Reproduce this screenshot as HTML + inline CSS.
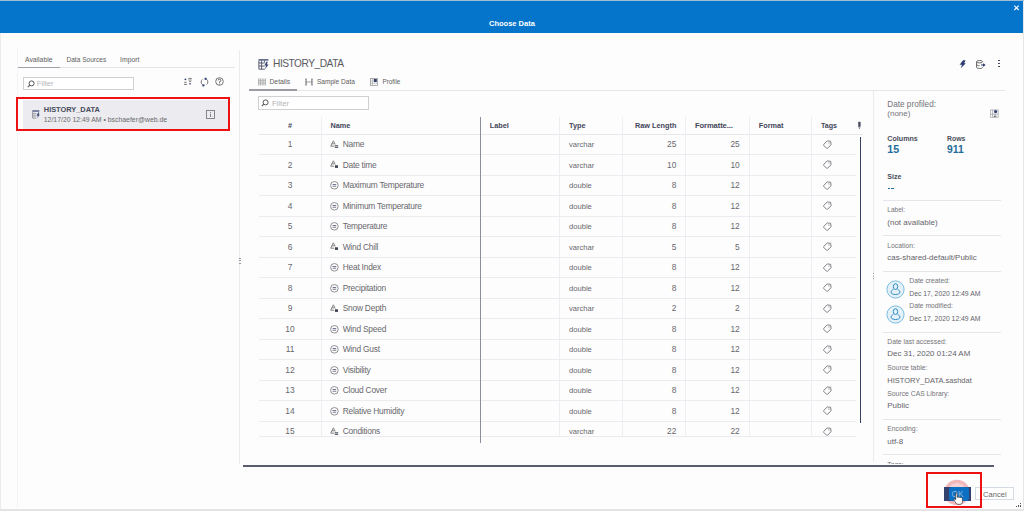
<!DOCTYPE html>
<html><head><meta charset="utf-8"><style>
html,body{margin:0;padding:0;}
body{width:1024px;height:511px;position:relative;overflow:hidden;background:#fdfdfe;font-family:"Liberation Sans",sans-serif;}
.t{position:absolute;white-space:nowrap;}
.r{position:absolute;}
</style></head><body>
<div class="r" style="left:0.00px;top:0.00px;width:1024.00px;height:1.00px;background:#9fbdd4;"></div>
<div class="r" style="left:0.00px;top:1.00px;width:1023.00px;height:31.50px;background:#0575cc;"></div>
<div class="r" style="left:1023.00px;top:1.00px;width:1.00px;height:510.00px;background:#e6e6e6;"></div>
<div class="r" style="left:0.00px;top:32.50px;width:1023.00px;height:6.50px;background:#fcfbf8;"></div>
<div class="r" style="left:0.00px;top:32.50px;width:1.00px;height:478.50px;background:#ececec;"></div>
<div class="r" style="left:0.00px;top:508.60px;width:1022.50px;height:2.40px;background:#e4e4e6;"></div>
<div class="t" style="left:489.00px;top:20.00px;font-size:7.5px;line-height:7.5px;font-weight:700;color:#ffffff;">Choose Data</div>
<svg class="r" style="left:1013.00px;top:4.00px" width="7" height="7" viewBox="0 0 7 7"><path d="M1.3 1.6 L5.7 6 M5.7 1.6 L1.3 6" stroke="#f4f8fc" stroke-width="1.2"/></svg>
<div class="r" style="left:16.80px;top:47.00px;width:1.00px;height:461.00px;background:#f3f3f5;"></div>
<div class="t" style="left:25.00px;top:57.00px;font-size:6.8px;line-height:6.8px;font-weight:400;color:#606060;">Available</div>
<div class="t" style="left:66.50px;top:57.00px;font-size:6.55px;line-height:6.55px;font-weight:400;color:#606060;">Data Sources</div>
<div class="t" style="left:120.00px;top:57.00px;font-size:6.9px;line-height:6.9px;font-weight:400;color:#606060;">Import</div>
<div class="r" style="left:18.00px;top:67.00px;width:216.50px;height:1.00px;background:#e4e4e8;"></div>
<div class="r" style="left:18.00px;top:66.80px;width:42.00px;height:1.40px;background:#a0a0a8;"></div>
<div class="r" style="left:22.70px;top:77.40px;width:111.00px;height:13.00px;background:#ffffff;border:1px solid #cfcfd4;box-sizing:border-box;"></div>
<svg class="r" style="left:26.50px;top:80.00px" width="8" height="8" viewBox="0 0 8 8"><circle cx="4.6" cy="3.4" r="2.5" fill="none" stroke="#555" stroke-width="1"/><path d="M2.8 5.2 L0.8 7.2" stroke="#555" stroke-width="1.1"/></svg>
<div class="t" style="left:36.70px;top:80.00px;font-size:7.6px;line-height:7.6px;font-weight:400;color:#b4b4b8;">Filter</div>
<svg class="r" style="left:183.00px;top:77.00px" width="10" height="9" viewBox="0 0 10 9"><circle cx="2.4" cy="2.3" r="0.9" fill="#2e3d6e"/><path d="M1.2 5.3h2.4M1 7.4h3" stroke="#666" stroke-width="0.9"/><path d="M5.2 1.4h3.6M5.4 3h3.2M6 4.6h2.2" stroke="#666" stroke-width="0.8"/><path d="M5.9 6.3h2.3L7 7.9z" fill="#2e3d6e"/></svg>
<svg class="r" style="left:199.50px;top:77.00px" width="9" height="10" viewBox="0 0 9 10"><path d="M6.4 2.2A3.4 3.4 0 0 1 6.6 7.6M2.6 7.8A3.4 3.4 0 0 1 2.4 2.4" stroke="#666" stroke-width="0.9" fill="none"/><path d="M4.6 0.8h2v2h-2z" fill="#2e3d6e"/><path d="M2.4 7.4h2v2h-2z" fill="#2e3d6e"/></svg>
<svg class="r" style="left:214.80px;top:77.30px" width="9" height="9" viewBox="0 0 9 9"><circle cx="4.5" cy="4.5" r="3.8" fill="none" stroke="#666" stroke-width="0.9"/><path d="M3.2 3.4a1.3 1.3 0 1 1 1.3 1.4v0.9" stroke="#555" stroke-width="0.9" fill="none"/><circle cx="4.5" cy="6.9" r="0.5" fill="#555"/></svg>
<div class="r" style="left:23.20px;top:99.50px;width:204.40px;height:29.00px;background:#ebebf0;"></div>
<svg class="r" style="left:31.50px;top:109.50px" width="9" height="9" viewBox="0 0 9 9"><path d="M0.3 1h7" stroke="#34406e" stroke-width="1.2"/><path d="M0.7 1.5v6.8" stroke="#8a8a94" stroke-width="0.9"/><path d="M0.7 3.7h3.6M0.7 5.9h3.6M0.7 8.1h3.6" stroke="#8a8a94" stroke-width="0.9"/><path d="M6.2 2.6L4.6 5.4h1.3L5.2 8.2 7.8 4.6H6.5l0.8-2z" fill="#34406e"/></svg>
<div class="t" style="left:43.80px;top:106.00px;font-size:7.4px;line-height:7.4px;font-weight:700;color:#484c5c;">HISTORY_DATA</div>
<div class="t" style="left:43.80px;top:117.00px;font-size:6.88px;line-height:6.88px;font-weight:400;color:#6a6a6a;">12/17/20 12:49 AM &#8226; bschaefer@web.de</div>
<svg class="r" style="left:205.50px;top:109.50px" width="9" height="9" viewBox="0 0 9 9"><rect x="0.5" y="0.5" width="8" height="8" fill="none" stroke="#7a7a80" stroke-width="0.9"/><path d="M4.5 3.8v3.2" stroke="#666" stroke-width="0.8"/><circle cx="4.5" cy="2.4" r="0.5" fill="#666"/></svg>
<div class="r" style="left:16.00px;top:97.00px;width:214.30px;height:33.70px;background:transparent;border:2.3px solid #ee1111;box-sizing:border-box;"></div>
<div class="r" style="left:239.20px;top:50.00px;width:1.00px;height:414.00px;background:#ececf0;"></div>
<div class="r" style="left:239.30px;top:257.50px;width:1.30px;height:1.20px;background:#9a9aa4;"></div>
<div class="r" style="left:239.30px;top:260.10px;width:1.30px;height:1.20px;background:#9a9aa4;"></div>
<div class="r" style="left:239.30px;top:262.70px;width:1.30px;height:1.20px;background:#9a9aa4;"></div>
<svg class="r" style="left:257.50px;top:58.50px" width="11" height="11" viewBox="0 0 11 11"><path d="M0.6 0.9h9.8" stroke="#34406e" stroke-width="1.3"/><path d="M0.9 1.5v8.7h6M0.6 4h6M0.6 7h6M3.6 1.5v8.7M6.6 1.5v2" stroke="#4a4f66" stroke-width="0.9" fill="none"/><path d="M8.4 2.8L6.4 6.4h1.7L7 10.2l3.6-4.8H8.8l1-2.6z" fill="#34406e"/></svg>
<div class="t" style="left:273.00px;top:59.00px;font-size:10.2px;line-height:10.2px;font-weight:400;color:#5a5a5e;letter-spacing:-0.48px;">HISTORY_DATA</div>
<svg class="r" style="left:959.30px;top:59.50px" width="8" height="9" viewBox="0 0 8 9"><path d="M4 0.2H6.6L5.2 3.2H6.8L1.8 8.2 3 4.8H0.6z" fill="#2e3d6e"/></svg>
<svg class="r" style="left:976.00px;top:59.50px" width="10" height="9" viewBox="0 0 10 9"><ellipse cx="3.6" cy="1.7" rx="3" ry="1.2" fill="none" stroke="#555" stroke-width="0.9"/><path d="M0.6 1.7v5.6c0 0.7 1.3 1.2 3 1.2s3-0.5 3-1.2M0.6 4.5c0 0.7 1.3 1.2 3 1.2" fill="none" stroke="#555" stroke-width="0.9"/><path d="M5 5h3.5M7.2 3.8l1.4 1.2-1.4 1.2" stroke="#2e3d6e" stroke-width="1.2" fill="none"/></svg>
<div class="r" style="left:998.40px;top:60.20px;width:1.30px;height:1.20px;background:#4a4f65;"></div>
<div class="r" style="left:998.40px;top:62.90px;width:1.30px;height:1.20px;background:#4a4f65;"></div>
<div class="r" style="left:998.40px;top:65.60px;width:1.30px;height:1.20px;background:#4a4f65;"></div>
<svg class="r" style="left:257.50px;top:78.30px" width="8" height="8" viewBox="0 0 8 8"><path d="M0.8 0.5v7M2.8 0.5v7M5 0.5v7M7.2 0.5v7" stroke="#999" stroke-width="1"/><path d="M0.8 2.5h6.4M0.8 5h6.4" stroke="#aaa" stroke-width="0.6"/></svg>
<div class="t" style="left:269.50px;top:79.00px;font-size:6.75px;line-height:6.75px;font-weight:400;color:#606060;">Details</div>
<svg class="r" style="left:304.80px;top:78.30px" width="8" height="8" viewBox="0 0 8 8"><path d="M1.2 0.5v7M6.8 0.5v7" stroke="#666" stroke-width="0.8"/><path d="M0 1.3h1.2M0 3.2h1.2M0 5h1.2M0 6.8h1.2M6.8 1.3H8M6.8 3.2H8M6.8 5H8M6.8 6.8H8M1.2 4h5.6" stroke="#777" stroke-width="0.7"/></svg>
<div class="t" style="left:316.90px;top:79.00px;font-size:6.6px;line-height:6.6px;font-weight:400;color:#606060;">Sample Data</div>
<svg class="r" style="left:370.00px;top:78.30px" width="8" height="8" viewBox="0 0 8 8"><rect x="0.5" y="0.5" width="7" height="7" fill="none" stroke="#9a9aa0" stroke-width="0.8"/><path d="M2.6 0.5v7M0.5 3h2M0.5 5.2h7" stroke="#aaa" stroke-width="0.7"/><rect x="3.8" y="1" width="3" height="3" fill="#34406a"/></svg>
<div class="t" style="left:382.50px;top:79.00px;font-size:6.3px;line-height:6.3px;font-weight:400;color:#606060;">Profile</div>
<div class="r" style="left:249.00px;top:89.50px;width:756.00px;height:1.00px;background:#e6e6ea;"></div>
<div class="r" style="left:249.00px;top:89.20px;width:48.00px;height:1.60px;background:#9c9ca6;"></div>
<div class="r" style="left:258.20px;top:96.20px;width:110.40px;height:13.40px;background:#ffffff;border:1px solid #cfcfd4;box-sizing:border-box;"></div>
<svg class="r" style="left:261.30px;top:99.00px" width="8" height="8" viewBox="0 0 8 8"><circle cx="4.6" cy="3.4" r="2.5" fill="none" stroke="#555" stroke-width="1"/><path d="M2.8 5.2 L0.8 7.2" stroke="#555" stroke-width="1.1"/></svg>
<div class="t" style="left:271.90px;top:100.00px;font-size:7.7px;line-height:7.7px;font-weight:400;color:#b4b4b8;">Filter</div>
<div class="r" style="left:259.00px;top:133.50px;width:604.00px;height:1.00px;background:#e8e8ec;"></div>
<div class="r" style="left:320.50px;top:117.00px;width:1.00px;height:325.00px;background:#eeeef2;"></div>
<div class="r" style="left:558.70px;top:117.00px;width:1.00px;height:325.00px;background:#eeeef2;"></div>
<div class="r" style="left:622.00px;top:117.00px;width:1.00px;height:325.00px;background:#eeeef2;"></div>
<div class="r" style="left:685.30px;top:117.00px;width:1.00px;height:325.00px;background:#eeeef2;"></div>
<div class="r" style="left:749.00px;top:117.00px;width:1.00px;height:325.00px;background:#eeeef2;"></div>
<div class="r" style="left:811.40px;top:117.00px;width:1.00px;height:325.00px;background:#eeeef2;"></div>
<div class="t" style="left:190.00px;width:200px;text-align:center;top:122.00px;font-size:7.3px;line-height:7.3px;font-weight:700;color:#43465a;">#</div>
<div class="t" style="left:330.50px;top:122.00px;font-size:7.3px;line-height:7.3px;font-weight:700;color:#43465a;">Name</div>
<div class="t" style="left:489.70px;top:122.00px;font-size:7.3px;line-height:7.3px;font-weight:700;color:#43465a;">Label</div>
<div class="t" style="left:569.00px;top:122.00px;font-size:7.3px;line-height:7.3px;font-weight:700;color:#43465a;">Type</div>
<div class="t" style="right:347.60px;top:122.00px;font-size:7.3px;line-height:7.3px;font-weight:700;color:#43465a;">Raw Length</div>
<div class="t" style="left:695.00px;top:122.00px;font-size:7.6px;line-height:7.6px;font-weight:700;color:#43465a;letter-spacing:-0.1px;">Formatte...</div>
<div class="t" style="left:758.75px;top:122.00px;font-size:7.27px;line-height:7.27px;font-weight:700;color:#43465a;">Format</div>
<div class="t" style="left:821.00px;top:123.00px;font-size:7.1px;line-height:7.1px;font-weight:700;color:#43465a;">Tags</div>
<svg class="r" style="left:857.00px;top:121.00px" width="5" height="9" viewBox="0 0 5 9"><rect x="1.2" y="0.8" width="2.4" height="5" fill="#4a4d60"/><path d="M1.3 6.6h2.2L2.4 8z" fill="#4a4d60"/></svg>
<div class="r" style="left:259.00px;top:154.00px;width:597.00px;height:1.00px;background:#ececf0;"></div>
<div class="t" style="left:190.00px;width:200px;text-align:center;top:140.00px;font-size:8.4px;line-height:8.4px;font-weight:400;color:#68686c;">1</div>
<svg class="r" style="left:329.50px;top:139.50px" width="9" height="9" viewBox="0 0 9 9"><path d="M3.4 0.8L0.7 6.2h3.6" fill="none" stroke="#777" stroke-width="0.9"/><path d="M3.4 0.8l1.8 3.7M1.8 3.8h2.6" fill="none" stroke="#777" stroke-width="0.9"/><path d="M4.8 5.8h3.4M4.8 7.3h3.4" stroke="#3e4150" stroke-width="1"/></svg>
<div class="t" style="left:342.70px;top:140.00px;font-size:8.4px;line-height:8.4px;font-weight:400;color:#68686c;letter-spacing:-0.22px;">Name</div>
<div class="t" style="left:569.00px;top:141.00px;font-size:7.6px;line-height:7.6px;font-weight:400;color:#68686c;">varchar</div>
<div class="t" style="right:347.60px;top:140.00px;font-size:8.4px;line-height:8.4px;font-weight:400;color:#68686c;">25</div>
<div class="t" style="right:284.30px;top:140.00px;font-size:8.4px;line-height:8.4px;font-weight:400;color:#68686c;">25</div>
<svg class="r" style="left:822.80px;top:138.60px" width="10" height="10" viewBox="0 0 10 10"><g transform="rotate(45 5 5)"><path d="M2.3 3.4L5 1.2 7.7 3.4V8.4Q7.7 9 7.1 9H2.9Q2.3 9 2.3 8.4z" fill="none" stroke="#7a7a7e" stroke-width="0.9" stroke-linejoin="round"/><circle cx="5" cy="3.6" r="0.55" fill="#777"/></g></svg>
<div class="r" style="left:259.00px;top:174.50px;width:597.00px;height:1.00px;background:#ececf0;"></div>
<div class="t" style="left:190.00px;width:200px;text-align:center;top:161.00px;font-size:8.4px;line-height:8.4px;font-weight:400;color:#68686c;">2</div>
<svg class="r" style="left:329.50px;top:160.00px" width="9" height="9" viewBox="0 0 9 9"><path d="M3.4 0.8L0.7 6.2h3.6" fill="none" stroke="#777" stroke-width="0.9"/><path d="M3.4 0.8l1.8 3.7M1.8 3.8h2.6" fill="none" stroke="#777" stroke-width="0.9"/><rect x="5" y="5.3" width="3" height="2.6" fill="#3e4150"/></svg>
<div class="t" style="left:342.70px;top:161.00px;font-size:8.4px;line-height:8.4px;font-weight:400;color:#68686c;letter-spacing:-0.22px;">Date time</div>
<div class="t" style="left:569.00px;top:162.00px;font-size:7.6px;line-height:7.6px;font-weight:400;color:#68686c;">varchar</div>
<div class="t" style="right:347.60px;top:161.00px;font-size:8.4px;line-height:8.4px;font-weight:400;color:#68686c;">10</div>
<div class="t" style="right:284.30px;top:161.00px;font-size:8.4px;line-height:8.4px;font-weight:400;color:#68686c;">10</div>
<svg class="r" style="left:822.80px;top:159.10px" width="10" height="10" viewBox="0 0 10 10"><g transform="rotate(45 5 5)"><path d="M2.3 3.4L5 1.2 7.7 3.4V8.4Q7.7 9 7.1 9H2.9Q2.3 9 2.3 8.4z" fill="none" stroke="#7a7a7e" stroke-width="0.9" stroke-linejoin="round"/><circle cx="5" cy="3.6" r="0.55" fill="#777"/></g></svg>
<div class="r" style="left:259.00px;top:195.00px;width:597.00px;height:1.00px;background:#ececf0;"></div>
<div class="t" style="left:190.00px;width:200px;text-align:center;top:181.00px;font-size:8.4px;line-height:8.4px;font-weight:400;color:#68686c;">3</div>
<svg class="r" style="left:329.50px;top:181.00px" width="9" height="9" viewBox="0 0 9 9"><circle cx="4.4" cy="4.3" r="3.8" fill="none" stroke="#85858c" stroke-width="0.9"/><path d="M2.6 3.6h3.6" stroke="#3c466e" stroke-width="0.8"/><path d="M2.6 5.3h3.6" stroke="#66666c" stroke-width="0.8"/></svg>
<div class="t" style="left:342.70px;top:181.00px;font-size:8.4px;line-height:8.4px;font-weight:400;color:#68686c;letter-spacing:-0.22px;">Maximum Temperature</div>
<div class="t" style="left:569.00px;top:182.00px;font-size:7.6px;line-height:7.6px;font-weight:400;color:#68686c;">double</div>
<div class="t" style="right:347.60px;top:181.00px;font-size:8.4px;line-height:8.4px;font-weight:400;color:#68686c;">8</div>
<div class="t" style="right:284.30px;top:181.00px;font-size:8.4px;line-height:8.4px;font-weight:400;color:#68686c;">12</div>
<svg class="r" style="left:822.80px;top:179.60px" width="10" height="10" viewBox="0 0 10 10"><g transform="rotate(45 5 5)"><path d="M2.3 3.4L5 1.2 7.7 3.4V8.4Q7.7 9 7.1 9H2.9Q2.3 9 2.3 8.4z" fill="none" stroke="#7a7a7e" stroke-width="0.9" stroke-linejoin="round"/><circle cx="5" cy="3.6" r="0.55" fill="#777"/></g></svg>
<div class="r" style="left:259.00px;top:215.50px;width:597.00px;height:1.00px;background:#ececf0;"></div>
<div class="t" style="left:190.00px;width:200px;text-align:center;top:202.00px;font-size:8.4px;line-height:8.4px;font-weight:400;color:#68686c;">4</div>
<svg class="r" style="left:329.50px;top:201.50px" width="9" height="9" viewBox="0 0 9 9"><circle cx="4.4" cy="4.3" r="3.8" fill="none" stroke="#85858c" stroke-width="0.9"/><path d="M2.6 3.6h3.6" stroke="#3c466e" stroke-width="0.8"/><path d="M2.6 5.3h3.6" stroke="#66666c" stroke-width="0.8"/></svg>
<div class="t" style="left:342.70px;top:202.00px;font-size:8.4px;line-height:8.4px;font-weight:400;color:#68686c;letter-spacing:-0.22px;">Minimum Temperature</div>
<div class="t" style="left:569.00px;top:203.00px;font-size:7.6px;line-height:7.6px;font-weight:400;color:#68686c;">double</div>
<div class="t" style="right:347.60px;top:202.00px;font-size:8.4px;line-height:8.4px;font-weight:400;color:#68686c;">8</div>
<div class="t" style="right:284.30px;top:202.00px;font-size:8.4px;line-height:8.4px;font-weight:400;color:#68686c;">12</div>
<svg class="r" style="left:822.80px;top:200.10px" width="10" height="10" viewBox="0 0 10 10"><g transform="rotate(45 5 5)"><path d="M2.3 3.4L5 1.2 7.7 3.4V8.4Q7.7 9 7.1 9H2.9Q2.3 9 2.3 8.4z" fill="none" stroke="#7a7a7e" stroke-width="0.9" stroke-linejoin="round"/><circle cx="5" cy="3.6" r="0.55" fill="#777"/></g></svg>
<div class="r" style="left:259.00px;top:236.00px;width:597.00px;height:1.00px;background:#ececf0;"></div>
<div class="t" style="left:190.00px;width:200px;text-align:center;top:222.00px;font-size:8.4px;line-height:8.4px;font-weight:400;color:#68686c;">5</div>
<svg class="r" style="left:329.50px;top:222.00px" width="9" height="9" viewBox="0 0 9 9"><circle cx="4.4" cy="4.3" r="3.8" fill="none" stroke="#85858c" stroke-width="0.9"/><path d="M2.6 3.6h3.6" stroke="#3c466e" stroke-width="0.8"/><path d="M2.6 5.3h3.6" stroke="#66666c" stroke-width="0.8"/></svg>
<div class="t" style="left:342.70px;top:222.00px;font-size:8.4px;line-height:8.4px;font-weight:400;color:#68686c;letter-spacing:-0.22px;">Temperature</div>
<div class="t" style="left:569.00px;top:223.00px;font-size:7.6px;line-height:7.6px;font-weight:400;color:#68686c;">double</div>
<div class="t" style="right:347.60px;top:222.00px;font-size:8.4px;line-height:8.4px;font-weight:400;color:#68686c;">8</div>
<div class="t" style="right:284.30px;top:222.00px;font-size:8.4px;line-height:8.4px;font-weight:400;color:#68686c;">12</div>
<svg class="r" style="left:822.80px;top:220.60px" width="10" height="10" viewBox="0 0 10 10"><g transform="rotate(45 5 5)"><path d="M2.3 3.4L5 1.2 7.7 3.4V8.4Q7.7 9 7.1 9H2.9Q2.3 9 2.3 8.4z" fill="none" stroke="#7a7a7e" stroke-width="0.9" stroke-linejoin="round"/><circle cx="5" cy="3.6" r="0.55" fill="#777"/></g></svg>
<div class="r" style="left:259.00px;top:256.50px;width:597.00px;height:1.00px;background:#ececf0;"></div>
<div class="t" style="left:190.00px;width:200px;text-align:center;top:243.00px;font-size:8.4px;line-height:8.4px;font-weight:400;color:#68686c;">6</div>
<svg class="r" style="left:329.50px;top:242.00px" width="9" height="9" viewBox="0 0 9 9"><path d="M3.4 0.8L0.7 6.2h3.6" fill="none" stroke="#777" stroke-width="0.9"/><path d="M3.4 0.8l1.8 3.7M1.8 3.8h2.6" fill="none" stroke="#777" stroke-width="0.9"/><rect x="5" y="5.3" width="3" height="2.6" fill="#3e4150"/></svg>
<div class="t" style="left:342.70px;top:243.00px;font-size:8.4px;line-height:8.4px;font-weight:400;color:#68686c;letter-spacing:-0.22px;">Wind Chill</div>
<div class="t" style="left:569.00px;top:244.00px;font-size:7.6px;line-height:7.6px;font-weight:400;color:#68686c;">varchar</div>
<div class="t" style="right:347.60px;top:243.00px;font-size:8.4px;line-height:8.4px;font-weight:400;color:#68686c;">5</div>
<div class="t" style="right:284.30px;top:243.00px;font-size:8.4px;line-height:8.4px;font-weight:400;color:#68686c;">5</div>
<svg class="r" style="left:822.80px;top:241.10px" width="10" height="10" viewBox="0 0 10 10"><g transform="rotate(45 5 5)"><path d="M2.3 3.4L5 1.2 7.7 3.4V8.4Q7.7 9 7.1 9H2.9Q2.3 9 2.3 8.4z" fill="none" stroke="#7a7a7e" stroke-width="0.9" stroke-linejoin="round"/><circle cx="5" cy="3.6" r="0.55" fill="#777"/></g></svg>
<div class="r" style="left:259.00px;top:277.00px;width:597.00px;height:1.00px;background:#ececf0;"></div>
<div class="t" style="left:190.00px;width:200px;text-align:center;top:263.00px;font-size:8.4px;line-height:8.4px;font-weight:400;color:#68686c;">7</div>
<svg class="r" style="left:329.50px;top:263.00px" width="9" height="9" viewBox="0 0 9 9"><circle cx="4.4" cy="4.3" r="3.8" fill="none" stroke="#85858c" stroke-width="0.9"/><path d="M2.6 3.6h3.6" stroke="#3c466e" stroke-width="0.8"/><path d="M2.6 5.3h3.6" stroke="#66666c" stroke-width="0.8"/></svg>
<div class="t" style="left:342.70px;top:263.00px;font-size:8.4px;line-height:8.4px;font-weight:400;color:#68686c;letter-spacing:-0.22px;">Heat Index</div>
<div class="t" style="left:569.00px;top:264.00px;font-size:7.6px;line-height:7.6px;font-weight:400;color:#68686c;">double</div>
<div class="t" style="right:347.60px;top:263.00px;font-size:8.4px;line-height:8.4px;font-weight:400;color:#68686c;">8</div>
<div class="t" style="right:284.30px;top:263.00px;font-size:8.4px;line-height:8.4px;font-weight:400;color:#68686c;">12</div>
<svg class="r" style="left:822.80px;top:261.60px" width="10" height="10" viewBox="0 0 10 10"><g transform="rotate(45 5 5)"><path d="M2.3 3.4L5 1.2 7.7 3.4V8.4Q7.7 9 7.1 9H2.9Q2.3 9 2.3 8.4z" fill="none" stroke="#7a7a7e" stroke-width="0.9" stroke-linejoin="round"/><circle cx="5" cy="3.6" r="0.55" fill="#777"/></g></svg>
<div class="r" style="left:259.00px;top:297.50px;width:597.00px;height:1.00px;background:#ececf0;"></div>
<div class="t" style="left:190.00px;width:200px;text-align:center;top:284.00px;font-size:8.4px;line-height:8.4px;font-weight:400;color:#68686c;">8</div>
<svg class="r" style="left:329.50px;top:283.50px" width="9" height="9" viewBox="0 0 9 9"><circle cx="4.4" cy="4.3" r="3.8" fill="none" stroke="#85858c" stroke-width="0.9"/><path d="M2.6 3.6h3.6" stroke="#3c466e" stroke-width="0.8"/><path d="M2.6 5.3h3.6" stroke="#66666c" stroke-width="0.8"/></svg>
<div class="t" style="left:342.70px;top:284.00px;font-size:8.4px;line-height:8.4px;font-weight:400;color:#68686c;letter-spacing:-0.22px;">Precipitation</div>
<div class="t" style="left:569.00px;top:285.00px;font-size:7.6px;line-height:7.6px;font-weight:400;color:#68686c;">double</div>
<div class="t" style="right:347.60px;top:284.00px;font-size:8.4px;line-height:8.4px;font-weight:400;color:#68686c;">8</div>
<div class="t" style="right:284.30px;top:284.00px;font-size:8.4px;line-height:8.4px;font-weight:400;color:#68686c;">12</div>
<svg class="r" style="left:822.80px;top:282.10px" width="10" height="10" viewBox="0 0 10 10"><g transform="rotate(45 5 5)"><path d="M2.3 3.4L5 1.2 7.7 3.4V8.4Q7.7 9 7.1 9H2.9Q2.3 9 2.3 8.4z" fill="none" stroke="#7a7a7e" stroke-width="0.9" stroke-linejoin="round"/><circle cx="5" cy="3.6" r="0.55" fill="#777"/></g></svg>
<div class="r" style="left:259.00px;top:318.00px;width:597.00px;height:1.00px;background:#ececf0;"></div>
<div class="t" style="left:190.00px;width:200px;text-align:center;top:304.00px;font-size:8.4px;line-height:8.4px;font-weight:400;color:#68686c;">9</div>
<svg class="r" style="left:329.50px;top:303.50px" width="9" height="9" viewBox="0 0 9 9"><path d="M3.4 0.8L0.7 6.2h3.6" fill="none" stroke="#777" stroke-width="0.9"/><path d="M3.4 0.8l1.8 3.7M1.8 3.8h2.6" fill="none" stroke="#777" stroke-width="0.9"/><rect x="5" y="5.3" width="3" height="2.6" fill="#3e4150"/></svg>
<div class="t" style="left:342.70px;top:304.00px;font-size:8.4px;line-height:8.4px;font-weight:400;color:#68686c;letter-spacing:-0.22px;">Snow Depth</div>
<div class="t" style="left:569.00px;top:305.00px;font-size:7.6px;line-height:7.6px;font-weight:400;color:#68686c;">varchar</div>
<div class="t" style="right:347.60px;top:304.00px;font-size:8.4px;line-height:8.4px;font-weight:400;color:#68686c;">2</div>
<div class="t" style="right:284.30px;top:304.00px;font-size:8.4px;line-height:8.4px;font-weight:400;color:#68686c;">2</div>
<svg class="r" style="left:822.80px;top:302.60px" width="10" height="10" viewBox="0 0 10 10"><g transform="rotate(45 5 5)"><path d="M2.3 3.4L5 1.2 7.7 3.4V8.4Q7.7 9 7.1 9H2.9Q2.3 9 2.3 8.4z" fill="none" stroke="#7a7a7e" stroke-width="0.9" stroke-linejoin="round"/><circle cx="5" cy="3.6" r="0.55" fill="#777"/></g></svg>
<div class="r" style="left:259.00px;top:338.50px;width:597.00px;height:1.00px;background:#ececf0;"></div>
<div class="t" style="left:190.00px;width:200px;text-align:center;top:325.00px;font-size:8.4px;line-height:8.4px;font-weight:400;color:#68686c;">10</div>
<svg class="r" style="left:329.50px;top:324.50px" width="9" height="9" viewBox="0 0 9 9"><circle cx="4.4" cy="4.3" r="3.8" fill="none" stroke="#85858c" stroke-width="0.9"/><path d="M2.6 3.6h3.6" stroke="#3c466e" stroke-width="0.8"/><path d="M2.6 5.3h3.6" stroke="#66666c" stroke-width="0.8"/></svg>
<div class="t" style="left:342.70px;top:325.00px;font-size:8.4px;line-height:8.4px;font-weight:400;color:#68686c;letter-spacing:-0.22px;">Wind Speed</div>
<div class="t" style="left:569.00px;top:326.00px;font-size:7.6px;line-height:7.6px;font-weight:400;color:#68686c;">double</div>
<div class="t" style="right:347.60px;top:325.00px;font-size:8.4px;line-height:8.4px;font-weight:400;color:#68686c;">8</div>
<div class="t" style="right:284.30px;top:325.00px;font-size:8.4px;line-height:8.4px;font-weight:400;color:#68686c;">12</div>
<svg class="r" style="left:822.80px;top:323.10px" width="10" height="10" viewBox="0 0 10 10"><g transform="rotate(45 5 5)"><path d="M2.3 3.4L5 1.2 7.7 3.4V8.4Q7.7 9 7.1 9H2.9Q2.3 9 2.3 8.4z" fill="none" stroke="#7a7a7e" stroke-width="0.9" stroke-linejoin="round"/><circle cx="5" cy="3.6" r="0.55" fill="#777"/></g></svg>
<div class="r" style="left:259.00px;top:359.00px;width:597.00px;height:1.00px;background:#ececf0;"></div>
<div class="t" style="left:190.00px;width:200px;text-align:center;top:345.00px;font-size:8.4px;line-height:8.4px;font-weight:400;color:#68686c;">11</div>
<svg class="r" style="left:329.50px;top:345.00px" width="9" height="9" viewBox="0 0 9 9"><circle cx="4.4" cy="4.3" r="3.8" fill="none" stroke="#85858c" stroke-width="0.9"/><path d="M2.6 3.6h3.6" stroke="#3c466e" stroke-width="0.8"/><path d="M2.6 5.3h3.6" stroke="#66666c" stroke-width="0.8"/></svg>
<div class="t" style="left:342.70px;top:345.00px;font-size:8.4px;line-height:8.4px;font-weight:400;color:#68686c;letter-spacing:-0.22px;">Wind Gust</div>
<div class="t" style="left:569.00px;top:346.00px;font-size:7.6px;line-height:7.6px;font-weight:400;color:#68686c;">double</div>
<div class="t" style="right:347.60px;top:345.00px;font-size:8.4px;line-height:8.4px;font-weight:400;color:#68686c;">8</div>
<div class="t" style="right:284.30px;top:345.00px;font-size:8.4px;line-height:8.4px;font-weight:400;color:#68686c;">12</div>
<svg class="r" style="left:822.80px;top:343.60px" width="10" height="10" viewBox="0 0 10 10"><g transform="rotate(45 5 5)"><path d="M2.3 3.4L5 1.2 7.7 3.4V8.4Q7.7 9 7.1 9H2.9Q2.3 9 2.3 8.4z" fill="none" stroke="#7a7a7e" stroke-width="0.9" stroke-linejoin="round"/><circle cx="5" cy="3.6" r="0.55" fill="#777"/></g></svg>
<div class="r" style="left:259.00px;top:379.50px;width:597.00px;height:1.00px;background:#ececf0;"></div>
<div class="t" style="left:190.00px;width:200px;text-align:center;top:366.00px;font-size:8.4px;line-height:8.4px;font-weight:400;color:#68686c;">12</div>
<svg class="r" style="left:329.50px;top:365.50px" width="9" height="9" viewBox="0 0 9 9"><circle cx="4.4" cy="4.3" r="3.8" fill="none" stroke="#85858c" stroke-width="0.9"/><path d="M2.6 3.6h3.6" stroke="#3c466e" stroke-width="0.8"/><path d="M2.6 5.3h3.6" stroke="#66666c" stroke-width="0.8"/></svg>
<div class="t" style="left:342.70px;top:366.00px;font-size:8.4px;line-height:8.4px;font-weight:400;color:#68686c;letter-spacing:-0.22px;">Visibility</div>
<div class="t" style="left:569.00px;top:367.00px;font-size:7.6px;line-height:7.6px;font-weight:400;color:#68686c;">double</div>
<div class="t" style="right:347.60px;top:366.00px;font-size:8.4px;line-height:8.4px;font-weight:400;color:#68686c;">8</div>
<div class="t" style="right:284.30px;top:366.00px;font-size:8.4px;line-height:8.4px;font-weight:400;color:#68686c;">12</div>
<svg class="r" style="left:822.80px;top:364.10px" width="10" height="10" viewBox="0 0 10 10"><g transform="rotate(45 5 5)"><path d="M2.3 3.4L5 1.2 7.7 3.4V8.4Q7.7 9 7.1 9H2.9Q2.3 9 2.3 8.4z" fill="none" stroke="#7a7a7e" stroke-width="0.9" stroke-linejoin="round"/><circle cx="5" cy="3.6" r="0.55" fill="#777"/></g></svg>
<div class="r" style="left:259.00px;top:400.00px;width:597.00px;height:1.00px;background:#ececf0;"></div>
<div class="t" style="left:190.00px;width:200px;text-align:center;top:386.00px;font-size:8.4px;line-height:8.4px;font-weight:400;color:#68686c;">13</div>
<svg class="r" style="left:329.50px;top:386.00px" width="9" height="9" viewBox="0 0 9 9"><circle cx="4.4" cy="4.3" r="3.8" fill="none" stroke="#85858c" stroke-width="0.9"/><path d="M2.6 3.6h3.6" stroke="#3c466e" stroke-width="0.8"/><path d="M2.6 5.3h3.6" stroke="#66666c" stroke-width="0.8"/></svg>
<div class="t" style="left:342.70px;top:386.00px;font-size:8.4px;line-height:8.4px;font-weight:400;color:#68686c;letter-spacing:-0.22px;">Cloud Cover</div>
<div class="t" style="left:569.00px;top:387.00px;font-size:7.6px;line-height:7.6px;font-weight:400;color:#68686c;">double</div>
<div class="t" style="right:347.60px;top:386.00px;font-size:8.4px;line-height:8.4px;font-weight:400;color:#68686c;">8</div>
<div class="t" style="right:284.30px;top:386.00px;font-size:8.4px;line-height:8.4px;font-weight:400;color:#68686c;">12</div>
<svg class="r" style="left:822.80px;top:384.60px" width="10" height="10" viewBox="0 0 10 10"><g transform="rotate(45 5 5)"><path d="M2.3 3.4L5 1.2 7.7 3.4V8.4Q7.7 9 7.1 9H2.9Q2.3 9 2.3 8.4z" fill="none" stroke="#7a7a7e" stroke-width="0.9" stroke-linejoin="round"/><circle cx="5" cy="3.6" r="0.55" fill="#777"/></g></svg>
<div class="r" style="left:259.00px;top:420.50px;width:597.00px;height:1.00px;background:#ececf0;"></div>
<div class="t" style="left:190.00px;width:200px;text-align:center;top:407.00px;font-size:8.4px;line-height:8.4px;font-weight:400;color:#68686c;">14</div>
<svg class="r" style="left:329.50px;top:406.50px" width="9" height="9" viewBox="0 0 9 9"><circle cx="4.4" cy="4.3" r="3.8" fill="none" stroke="#85858c" stroke-width="0.9"/><path d="M2.6 3.6h3.6" stroke="#3c466e" stroke-width="0.8"/><path d="M2.6 5.3h3.6" stroke="#66666c" stroke-width="0.8"/></svg>
<div class="t" style="left:342.70px;top:407.00px;font-size:8.4px;line-height:8.4px;font-weight:400;color:#68686c;letter-spacing:-0.22px;">Relative Humidity</div>
<div class="t" style="left:569.00px;top:408.00px;font-size:7.6px;line-height:7.6px;font-weight:400;color:#68686c;">double</div>
<div class="t" style="right:347.60px;top:407.00px;font-size:8.4px;line-height:8.4px;font-weight:400;color:#68686c;">8</div>
<div class="t" style="right:284.30px;top:407.00px;font-size:8.4px;line-height:8.4px;font-weight:400;color:#68686c;">12</div>
<svg class="r" style="left:822.80px;top:405.10px" width="10" height="10" viewBox="0 0 10 10"><g transform="rotate(45 5 5)"><path d="M2.3 3.4L5 1.2 7.7 3.4V8.4Q7.7 9 7.1 9H2.9Q2.3 9 2.3 8.4z" fill="none" stroke="#7a7a7e" stroke-width="0.9" stroke-linejoin="round"/><circle cx="5" cy="3.6" r="0.55" fill="#777"/></g></svg>
<div class="t" style="left:190.00px;width:200px;text-align:center;top:427.00px;font-size:8.4px;line-height:8.4px;font-weight:400;color:#68686c;">15</div>
<svg class="r" style="left:329.50px;top:426.50px" width="9" height="9" viewBox="0 0 9 9"><path d="M3.4 0.8L0.7 6.2h3.6" fill="none" stroke="#777" stroke-width="0.9"/><path d="M3.4 0.8l1.8 3.7M1.8 3.8h2.6" fill="none" stroke="#777" stroke-width="0.9"/><path d="M4.8 5.8h3.4M4.8 7.3h3.4" stroke="#3e4150" stroke-width="1"/></svg>
<div class="t" style="left:342.70px;top:427.00px;font-size:8.4px;line-height:8.4px;font-weight:400;color:#68686c;letter-spacing:-0.22px;">Conditions</div>
<div class="t" style="left:569.00px;top:428.00px;font-size:7.6px;line-height:7.6px;font-weight:400;color:#68686c;">varchar</div>
<div class="t" style="right:347.60px;top:427.00px;font-size:8.4px;line-height:8.4px;font-weight:400;color:#68686c;">22</div>
<div class="t" style="right:284.30px;top:427.00px;font-size:8.4px;line-height:8.4px;font-weight:400;color:#68686c;">22</div>
<svg class="r" style="left:822.80px;top:425.60px" width="10" height="10" viewBox="0 0 10 10"><g transform="rotate(45 5 5)"><path d="M2.3 3.4L5 1.2 7.7 3.4V8.4Q7.7 9 7.1 9H2.9Q2.3 9 2.3 8.4z" fill="none" stroke="#7a7a7e" stroke-width="0.9" stroke-linejoin="round"/><circle cx="5" cy="3.6" r="0.55" fill="#777"/></g></svg>
<div class="r" style="left:250.00px;top:436.50px;width:622.00px;height:28.50px;background:#fdfdfe;"></div>
<div class="r" style="left:259.00px;top:436.00px;width:597.00px;height:1.00px;background:#ececf0;"></div>
<div class="r" style="left:479.50px;top:117.00px;width:1.10px;height:325.50px;background:#8b8e9c;"></div>
<div class="r" style="left:859.60px;top:136.50px;width:1.60px;height:286.00px;background:#3c4060;"></div>
<div class="r" style="left:873.20px;top:90.50px;width:1.00px;height:371.50px;background:#ececf0;"></div>
<div class="r" style="left:872.60px;top:273.00px;width:1.30px;height:1.20px;background:#9a9aa4;"></div>
<div class="r" style="left:872.60px;top:275.60px;width:1.30px;height:1.20px;background:#9a9aa4;"></div>
<div class="r" style="left:872.60px;top:278.20px;width:1.30px;height:1.20px;background:#9a9aa4;"></div>
<svg class="r" style="left:990.30px;top:108.60px" width="9" height="9" viewBox="0 0 9 9"><rect x="0.6" y="0.9" width="7.6" height="7.4" fill="none" stroke="#b4b4ba" stroke-width="0.9"/><path d="M2.6 0.9v7.4M5 4.6v3.7M0.6 5.2h7.6" stroke="#9a9aa0" stroke-width="0.7"/><circle cx="5.6" cy="2.6" r="1.6" fill="#34406e"/><path d="M3.8 7.3h2.6" stroke="#555" stroke-width="0.9"/></svg>
<div class="t" style="left:887.30px;top:101.00px;font-size:8.2px;line-height:8.2px;font-weight:400;color:#747478;">Date profiled:</div>
<div class="t" style="left:887.30px;top:110.00px;font-size:8px;line-height:8px;font-weight:400;color:#747478;">(none)</div>
<div class="t" style="left:887.30px;top:136.00px;font-size:7.15px;line-height:7.15px;font-weight:700;color:#4a4d5a;">Columns</div>
<div class="t" style="left:887.30px;top:144.00px;font-size:10.7px;line-height:10.7px;font-weight:700;color:#246c98;">15</div>
<div class="t" style="left:947.00px;top:136.00px;font-size:6.9px;line-height:6.9px;font-weight:700;color:#4a4d5a;">Rows</div>
<div class="t" style="left:947.00px;top:145.00px;font-size:10.3px;line-height:10.3px;font-weight:700;color:#246c98;">911</div>
<div class="t" style="left:887.30px;top:173.00px;font-size:7px;line-height:7px;font-weight:700;color:#4a4d5a;">Size</div>
<div class="r" style="left:887.60px;top:188.00px;width:2.60px;height:1.40px;background:#246c98;"></div>
<div class="r" style="left:891.20px;top:188.00px;width:2.60px;height:1.40px;background:#246c98;"></div>
<div class="r" style="left:883.00px;top:199.60px;width:118.00px;height:1.00px;background:#e6e6ea;"></div>
<div class="r" style="left:883.00px;top:235.40px;width:118.00px;height:1.00px;background:#e6e6ea;"></div>
<div class="r" style="left:883.00px;top:271.00px;width:118.00px;height:1.00px;background:#e6e6ea;"></div>
<div class="r" style="left:883.00px;top:331.50px;width:118.00px;height:1.00px;background:#e6e6ea;"></div>
<div class="r" style="left:883.00px;top:418.50px;width:118.00px;height:1.00px;background:#e6e6ea;"></div>
<div class="r" style="left:883.00px;top:454.20px;width:118.00px;height:1.00px;background:#e6e6ea;"></div>
<div class="t" style="left:887.30px;top:207.00px;font-size:6.5px;line-height:6.5px;font-weight:400;color:#747478;">Label:</div>
<div class="t" style="left:887.30px;top:219.00px;font-size:8px;line-height:8px;font-weight:400;color:#646468;">(not available)</div>
<div class="t" style="left:887.30px;top:243.00px;font-size:6.8px;line-height:6.8px;font-weight:400;color:#747478;">Location:</div>
<div class="t" style="left:887.30px;top:254.00px;font-size:7.93px;line-height:7.93px;font-weight:400;color:#646468;">cas-shared-default/Public</div>
<svg class="r" style="left:886.30px;top:279.50px" width="19" height="19" viewBox="0 0 19 19"><circle cx="9.5" cy="9.5" r="8.6" fill="#e4f1f9" stroke="#6cb3da" stroke-width="0.9"/><ellipse cx="9.5" cy="6.6" rx="2.2" ry="2.9" fill="none" stroke="#2f8cc2" stroke-width="1"/><path d="M7.3 9.6c-1.6 0.4-2.2 1.6-2.2 2.6 0 1.5 2 2.3 4.4 2.3s4.4-0.8 4.4-2.3c0-1-0.6-2.2-2.2-2.6" fill="none" stroke="#2f8cc2" stroke-width="1"/></svg>
<div class="t" style="left:909.30px;top:278.00px;font-size:6.75px;line-height:6.75px;font-weight:400;color:#747478;">Date created:</div>
<div class="t" style="left:909.30px;top:291.00px;font-size:6.8px;line-height:6.8px;font-weight:400;color:#646468;">Dec 17, 2020 12:49 AM</div>
<svg class="r" style="left:886.30px;top:304.90px" width="19" height="19" viewBox="0 0 19 19"><circle cx="9.5" cy="9.5" r="8.6" fill="#e4f1f9" stroke="#6cb3da" stroke-width="0.9"/><ellipse cx="9.5" cy="6.6" rx="2.2" ry="2.9" fill="none" stroke="#2f8cc2" stroke-width="1"/><path d="M7.3 9.6c-1.6 0.4-2.2 1.6-2.2 2.6 0 1.5 2 2.3 4.4 2.3s4.4-0.8 4.4-2.3c0-1-0.6-2.2-2.2-2.6" fill="none" stroke="#2f8cc2" stroke-width="1"/></svg>
<div class="t" style="left:909.30px;top:303.00px;font-size:6.75px;line-height:6.75px;font-weight:400;color:#747478;">Date modified:</div>
<div class="t" style="left:909.30px;top:316.00px;font-size:6.8px;line-height:6.8px;font-weight:400;color:#646468;">Dec 17, 2020 12:49 AM</div>
<div class="t" style="left:887.30px;top:339.00px;font-size:6.8px;line-height:6.8px;font-weight:400;color:#747478;">Date last accessed:</div>
<div class="t" style="left:887.30px;top:350.00px;font-size:7.94px;line-height:7.94px;font-weight:400;color:#646468;">Dec 31, 2020 01:24 AM</div>
<div class="t" style="left:887.30px;top:365.00px;font-size:6.8px;line-height:6.8px;font-weight:400;color:#747478;">Source table:</div>
<div class="t" style="left:887.30px;top:377.00px;font-size:7.5px;line-height:7.5px;font-weight:400;color:#646468;">HISTORY_DATA.sashdat</div>
<div class="t" style="left:887.30px;top:391.00px;font-size:6.8px;line-height:6.8px;font-weight:400;color:#747478;">Source CAS Library:</div>
<div class="t" style="left:887.30px;top:402.00px;font-size:7.94px;line-height:7.94px;font-weight:400;color:#646468;">Public</div>
<div class="t" style="left:887.30px;top:426.00px;font-size:6.8px;line-height:6.8px;font-weight:400;color:#747478;">Encoding:</div>
<div class="t" style="left:887.30px;top:438.00px;font-size:7.94px;line-height:7.94px;font-weight:400;color:#646468;">utf-8</div>
<div class="r" style="left:880px;top:460px;width:120px;height:4px;overflow:hidden"><div class="t" style="left:7.3px;top:2px;font-size:6.8px;line-height:6.8px;color:#6e6e72">Tags:</div></div>
<div class="r" style="left:242.50px;top:465.20px;width:751.50px;height:1.60px;background:#5a5d70;"></div>
<div class="r" style="left:975.30px;top:487.20px;width:38.30px;height:13.20px;background:#ffffff;border:1px solid #d5dbe3;box-sizing:border-box;"></div>
<div class="t" style="left:983.00px;top:491.00px;font-size:7.6px;line-height:7.6px;font-weight:400;color:#666;">Cancel</div>
<svg class="r" style="left:941.00px;top:478.00px" width="32" height="30" viewBox="0 0 32 30"><circle cx="16" cy="14.5" r="12.8" fill="#f2b8bc"/><circle cx="16" cy="14.5" r="9.5" fill="#f6d2d5"/></svg>
<div class="r" style="left:944.20px;top:486.90px;width:26.60px;height:13.70px;background:#34426e;"></div>
<div class="r" style="left:948.50px;top:486.90px;width:20.00px;height:13.70px;background:#0b6fc3;border-radius:3px;"></div>
<div class="t" style="left:857.50px;width:200px;text-align:center;top:491.00px;font-size:8.2px;line-height:8.2px;font-weight:400;color:#8fb6df;">OK</div>
<svg class="r" style="left:953.00px;top:492.00px" width="11" height="14" viewBox="0 0 11 14"><g transform="scale(0.78)"><path d="M4.2 1.2c0.8 0 1.3 0.5 1.3 1.3v4.4c0.3-0.7 2.2-0.7 2.4 0.3 0.4-0.7 2.1-0.6 2.3 0.4 0.5-0.5 2-0.3 2 0.8v4c0 2-1.2 3.4-3.4 3.4H6.4c-1.3 0-2-0.6-2.7-1.6L1.2 10.2c-0.5-0.8 0.5-1.8 1.4-1.1l0.9 0.9V2.5c0-0.8 0.3-1.3 0.7-1.3z" fill="#ffffff" stroke="#333" stroke-width="0.9"/></g></svg>
<div class="r" style="left:926.00px;top:471.80px;width:56.00px;height:36.70px;background:transparent;border:2.3px solid #ee1111;box-sizing:border-box;"></div>
<div class="r" style="left:1019.50px;top:503.00px;width:1.20px;height:1.20px;background:#555;"></div>
<div class="r" style="left:1017.50px;top:505.00px;width:1.20px;height:1.20px;background:#555;"></div>
<div class="r" style="left:1019.50px;top:505.00px;width:1.20px;height:1.20px;background:#555;"></div>
<div class="r" style="left:1015.50px;top:506.20px;width:1.20px;height:1.20px;background:#555;"></div>
<div class="r" style="left:1017.50px;top:506.20px;width:1.20px;height:1.20px;background:#555;"></div>
<div class="r" style="left:1019.50px;top:506.20px;width:1.20px;height:1.20px;background:#555;"></div>
</body></html>
